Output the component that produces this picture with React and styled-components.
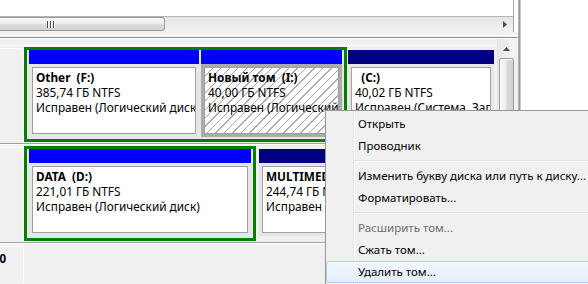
import React from 'react';
import styled, { createGlobalStyle, css } from 'styled-components';

const Global = createGlobalStyle`
  html, body { margin: 0; padding: 0; background: #fff; overflow: hidden; }
  body {
    font-family: "Noto Sans", "Liberation Sans", sans-serif;
    font-size: 11.5px;
    color: #000;
  }
  * { box-sizing: border-box; }
`;

const Screen = styled.div`
  position: relative;
  width: 588px;
  height: 284px;
  overflow: hidden;
  display: flex;
  background: #fff;
`;

const Main = styled.div`
  width: 518px;
  flex: none;
  display: flex;
  flex-direction: column;
  background: #f0f0f0;
`;

const TopArea = styled.div`
  height: 32px;
  background: #fff;
  flex: none;
`;

const ListView = styled.div`
  width: 514px;
  height: 32px;
  border-right: 1px solid #a5a5a5;
  display: flex;
  flex-direction: column;
  background: #fff;
`;

const ListBody = styled.div`
  height: 16px;
  background: #fff;
`;

const HScroll = styled.div`
  height: 16px;
  border-top: 1px solid #b4b4b4;
  display: flex;
  background: linear-gradient(#e6e6e6, #f2f2f2);
`;

const HThumb = styled.div`
  width: 165px;
  height: 14px;
  flex: none;
  border: 1px solid #9a9a9a;
  border-left: none;
  border-radius: 0 3px 3px 0;
  background: linear-gradient(#fafafa, #ececec 45%, #dadada 55%, #d2d2d2);
  display: flex;
  align-items: center;
  padding-left: 47px;
`;

const Grip = styled.div`
  display: flex;
  gap: 2px;
  height: 7px;
`;

const GripLine = styled.span`
  width: 1px;
  height: 7px;
  background: #4a4a4a;
  box-shadow: 1px 0 0 #fff;
`;

const HTrack = styled.div`
  flex: 1;
`;

const ArrowBtn = styled.div`
  width: 17px;
  flex: none;
  display: flex;
  align-items: center;
  justify-content: center;
`;

const PaneDivider = styled.div`
  height: 7px;
  flex: none;
  background: linear-gradient(
    to bottom,
    #f0f0f0 0 3px,
    #ffffff 3px 4px,
    #f0f0f0 4px 5px,
    #8e8e8e 5px 6px,
    #ffffff 6px 7px
  );
`;

const DiskPane = styled.div`
  flex: 1;
  display: flex;
  padding-right: 4px;
  min-height: 0;
`;

const Rows = styled.div`
  flex: 1;
  min-width: 0;
  overflow: hidden;
  padding-top: 6px;
  display: flex;
  flex-direction: column;
`;

const Row = styled.div`
  display: flex;
  flex: ${p => (p.$last ? 1 : 'none')};
  border-top: 1px solid #fff;
  border-bottom: ${p => (p.$last ? 'none' : '1px solid #a0a0a0')};
  padding: 1px 0;
`;

const LabelCell = styled.div`
  width: 24px;
  flex: none;
  align-self: stretch;
  border-right: 1px solid #fff;
  border-top: 1px solid #fff;
  margin-top: 1px;
  overflow: hidden;
  display: flex;
  justify-content: flex-end;
  align-items: flex-start;
`;

const DiskName = styled.div`
  white-space: nowrap;
  font-weight: bold;
  padding: 4px 17px 0 0;
  line-height: 15px;
`;

const Extended = styled.div`
  flex: none;
  display: flex;
  gap: 2px;
  border: 3px solid #008000;
  padding: 0 2px 2px;
  background: #e6e6e6;
`;

const Partition = styled.div`
  width: ${p => p.$w}px;
  flex: none;
  display: flex;
  flex-direction: column;
  margin: ${p => (p.$outside ? `3px 0 0 ${p.$ml}px` : '0')};
  align-self: flex-start;
`;

const PartHeader = styled.div`
  height: 14px;
  background: ${p => (p.$primary ? '#000080' : '#0000ff')};
`;

const PartBody = styled.div`
  padding: 3px;
  background: ${p => (p.$selected ? '#ababab' : '#e6e6e6')};
`;

const hatch = css`
  background-color: #fff;
  background-image: repeating-linear-gradient(
    135deg,
    #ffffff 0 5px,
    #a9a9a9 5px 6px
  );
`;

const PartBox = styled.div`
  height: 67px;
  border: 1px solid #a0a0a0;
  background: #fff;
  ${p => p.$selected && hatch}
  padding: 2px 3px;
  overflow: hidden;
  white-space: nowrap;
  line-height: 15px;
  font-size: 11.8px;
`;

const VolName = styled.div`
  font-weight: bold;
  white-space: pre;
`;

const VolLine = styled.div``;

const VScroll = styled.div`
  width: 17px;
  flex: none;
  display: flex;
  flex-direction: column;
  align-items: center;
  border-left: 1px solid #e3e3e3;
  background: linear-gradient(to right, #e8e8e8, #f4f4f4);
`;

const UpBtn = styled.div`
  height: 18px;
  width: 100%;
  display: flex;
  align-items: center;
  justify-content: center;
  padding-top: 1px;
`;

const VThumb = styled.div`
  margin-top: 1px;
  width: 15px;
  height: 170px;
  border: 1px solid #9a9a9a;
  border-radius: 2px;
  background: linear-gradient(to right, #f8f8f8, #ececec 45%, #dadada 55%, #d0d0d0);
  box-shadow: inset 1px 1px 0 #fff;
`;

const Splitter = styled.div`
  width: 3px;
  flex: none;
  background: linear-gradient(to right, #b4b4b4 0 1px, #9a9a9a 1px 2px, #c8c8c8 2px 3px);
`;

const RightPane = styled.div`
  flex: 1;
  background: #fff;
`;

const Menu = styled.div`
  position: absolute;
  left: 325px;
  top: 110px;
  width: 280px;
  border: 1px solid #979797;
  padding: 2px 0;
  background:
    linear-gradient(to right, transparent 0 27px, #e2e3e3 27px 28px, #ffffff 28px 29px, transparent 29px),
    #f0f0f0;
  box-shadow: 2px 2px 3px rgba(0, 0, 0, 0.25);
  font-family: "Noto Sans", "Liberation Sans", sans-serif;
`;

const MenuItem = styled.div`
  height: 22px;
  line-height: 20px;
  padding-left: 31px;
  border: 1px solid transparent;
  border-radius: 3px;
  white-space: nowrap;
  color: ${p => (p.$disabled ? '#6d6d6d' : '#000')};
  ${p =>
    p.$active &&
    css`
      border-color: #aecff7;
      background: linear-gradient(#f2f7fe, #e4eefb);
    `}
`;

const MenuSep = styled.div`
  height: 8px;
  margin-left: 28px;
  background: linear-gradient(
    to bottom,
    transparent 0 3px,
    #e0e0e0 3px 4px,
    #ffffff 4px 5px,
    transparent 5px
  );
`;

function PartitionView({ w, primary, selected, outside, ml = 0, name, size, status }) {
  return (
    <Partition $w={w} $outside={outside} $ml={ml}>
      <PartHeader $primary={primary} />
      <PartBody $selected={selected}>
        <PartBox $selected={selected}>
          <VolName>{name}</VolName>
          <VolLine>{size}</VolLine>
          <VolLine>{status}</VolLine>
        </PartBox>
      </PartBody>
    </Partition>
  );
}

export default function App() {
  return (
    <>
      <Global />
      <Screen>
        <Main>
          <TopArea>
            <ListView>
              <ListBody />
              <HScroll>
                <HThumb>
                  <Grip>
                    <GripLine />
                    <GripLine />
                    <GripLine />
                  </Grip>
                </HThumb>
                <HTrack />
                <ArrowBtn>
                  <svg width="4" height="7" viewBox="0 0 4 7">
                    <polygon points="0,0 4,3.5 0,7" fill="#4d4d4d" />
                  </svg>
                </ArrowBtn>
              </HScroll>
            </ListView>
          </TopArea>
          <PaneDivider />
          <DiskPane>
            <Rows>
              <Row>
                <LabelCell />
                <Extended>
                  <PartitionView
                    w={170}
                    name="Other  (F:)"
                    size="385,74 ГБ NTFS"
                    status="Исправен (Логический диск)"
                  />
                  <PartitionView
                    w={141}
                    selected
                    name="Новый том  (I:)"
                    size="40,00 ГБ NTFS"
                    status="Исправен (Логический диск)"
                  />
                </Extended>
                <PartitionView
                  w={146}
                  outside
                  ml={1}
                  primary
                  name="  (C:)"
                  size="40,02 ГБ NTFS"
                  status="Исправен (Система, Загрузка, Файл подкачки)"
                />
              </Row>
              <Row>
                <LabelCell />
                <Extended>
                  <PartitionView
                    w={222}
                    name="DATA  (D:)"
                    size="221,01 ГБ NTFS"
                    status="Исправен (Логический диск)"
                  />
                </Extended>
                <PartitionView
                  w={236}
                  outside
                  ml={3}
                  primary
                  name="MULTIMEDIA  (E:)"
                  size="244,74 ГБ NTFS"
                  status="Исправен (Основной раздел)"
                />
              </Row>
              <Row $last>
                <LabelCell>
                  <DiskName>CD-ROM 0</DiskName>
                </LabelCell>
              </Row>
            </Rows>
            <VScroll>
              <UpBtn>
                <svg width="7" height="4" viewBox="0 0 7 4">
                  <polygon points="0,4 3.5,0 7,4" fill="#4d4d4d" />
                </svg>
              </UpBtn>
              <VThumb />
            </VScroll>
          </DiskPane>
        </Main>
        <Splitter />
        <RightPane />
        <Menu>
          <MenuItem>Открыть</MenuItem>
          <MenuItem>Проводник</MenuItem>
          <MenuSep />
          <MenuItem>Изменить букву диска или путь к диску...</MenuItem>
          <MenuItem>Форматировать...</MenuItem>
          <MenuSep />
          <MenuItem $disabled>Расширить том...</MenuItem>
          <MenuItem>Сжать том...</MenuItem>
          <MenuItem $active>Удалить том...</MenuItem>
        </Menu>
      </Screen>
    </>
  );
}
